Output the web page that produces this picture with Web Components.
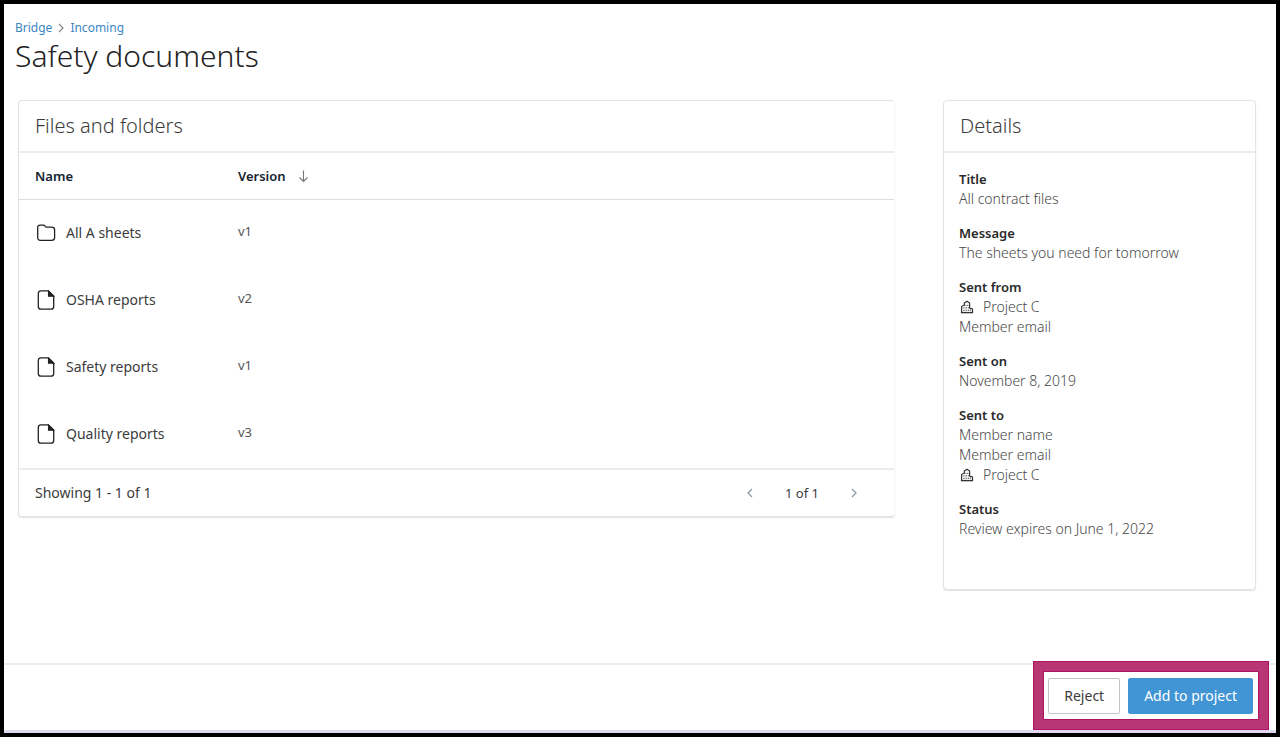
<!DOCTYPE html>
<html lang="en">
<head>
<meta charset="utf-8">
<title>Safety documents</title>
<style>
  body {
    margin: 0;
    font-family: "Noto Sans", "Open Sans", sans-serif;
    font-size: 14px;
    line-height: 20px;
    color: #3c3c3c;
    background: #000;
    --line: #e4e4e4;
    --link: #3c86c2;
    --accent: #4295d4;
    --highlight: #b83674;
    --label-size: 13px;
  }
</style>
</head>
<body>
<bridge-app></bridge-app>

<script>
class BaseElement extends HTMLElement {
  constructor() {
    super();
    this.attachShadow({ mode: "open" });
  }

  connectedCallback() {
    this.shadowRoot.innerHTML = `
      <style>:host, * { box-sizing: border-box; } ${this.styles}</style>
      ${this.markup}
    `;
  }
}

class UiIcon extends BaseElement {
  get styles() {
    return `
      :host { display: inline-flex; flex: none; }
      svg { display: block; fill: none; stroke: currentColor; }
    `;
  }

  get markup() {
    const icons = {
      folder: `<svg width="20" height="20" viewBox="0 0 20 20" stroke-width="1.3">
        <path d="M1.7 4.6c0-1.7.8-2.5 2.4-2.5h3.2c1 0 1.3.3 1.8 1.1.4.7.8 1 1.7 1h4.8c2 0 3 .8 3 2.6v7.8c0 1.8-.9 2.7-2.7 2.7H4.4c-1.8 0-2.7-.9-2.7-2.7z"/></svg>`,
      file: `<svg width="20" height="20" viewBox="0 0 20 20" stroke-width="1.3">
        <path d="M12.4.9H5C3.2.9 2.3 1.8 2.3 3.6v12.8c0 1.8.9 2.7 2.7 2.7h10c1.8 0 2.7-.9 2.7-2.7V6.1z"/>
        <path d="M12.6 1.3v4.9h4.9z" fill="currentColor"/></svg>`,
      building: `<svg width="14" height="14" viewBox="0 0 14 14" stroke-width="1.2">
        <path d="M1.6 12.5V6.6L4.3 5V3L7 1.2 9.6 3v5l2.9 1v3.5"/>
        <path d="M.9 12.6h12.2" stroke-width="1.4"/>
        <path d="M4.3 5.4h5M3.4 7.8h5.4M3.4 10.2h7.6" stroke-width="1" stroke-dasharray="1.2 1"/></svg>`,
      down: `<svg width="11" height="14" viewBox="0 0 11 14" stroke-width="1.1">
        <path d="M5.5 1.5V12M1.5 8.5l4 4 4-4"/></svg>`,
      left: `<svg width="8" height="12" viewBox="0 0 8 12" stroke-width="1.2">
        <path d="M6 2L2 6l4 4"/></svg>`,
      right: `<svg width="8" height="12" viewBox="0 0 8 12" stroke-width="1.2">
        <path d="M2 2l4 4-4 4"/></svg>`
    };
    return icons[this.getAttribute("name")];
  }
}

class BreadCrumbs extends BaseElement {
  get styles() {
    return `
      nav { display: flex; align-items: center; gap: 5px; font-size: 12px; line-height: 16px; }
      a { color: var(--link); text-decoration: none; }
      ui-icon { color: #888; }
    `;
  }

  get markup() {
    return `
      <nav aria-label="Breadcrumb">
        <a href="#bridge">Bridge</a>
        <ui-icon name="right"></ui-icon>
        <a href="#incoming">Incoming</a>
      </nav>
    `;
  }
}

class PanelCard extends BaseElement {
  get styles() {
    return `
      :host {
        display: block;
        border: 1px solid var(--line);
        border-radius: 4px;
        box-shadow: 0 1px 1px #e2e2e2;
        background: #fff;
      }
      :host([open-end]) { border-right-color: #f8f8f8; }
      h2 {
        margin: 0;
        padding: 12px 16px;
        border-bottom: 2px solid #ececec;
        font-size: 20px;
        font-weight: 300;
        line-height: 26px;
      }
    `;
  }

  get markup() {
    return `<h2>${this.getAttribute("heading")}</h2><slot></slot>`;
  }
}

class FileTable extends BaseElement {
  get styles() {
    return `
      :host { display: block; padding-bottom: 1px; }
      table { width: 100%; border-collapse: collapse; table-layout: fixed; }
      th, td { padding: 0 0 0 16px; text-align: left; }
      th {
        height: 46px;
        border-bottom: 1px solid #ddd;
        color: #14242f;
        font-size: var(--label-size);
        font-weight: 600;
      }
      th:first-child { width: 203px; }
      td { height: 67px; }
      td + td { padding-bottom: 3px; color: #555; font-size: var(--label-size); }
      .cell { display: flex; align-items: center; gap: 10px; padding-left: 1px; }
      .cell ui-icon { color: #222; }
      .sort { display: flex; align-items: center; gap: 12px; }
      .sort ui-icon { color: #777; }
    `;
  }

  get markup() {
    const rows = [
      ["folder", "All A sheets", "v1"],
      ["file", "OSHA reports", "v2"],
      ["file", "Safety reports", "v1"],
      ["file", "Quality reports", "v3"]
    ];
    return `
      <table>
        <thead>
          <tr>
            <th>Name</th>
            <th><span class="sort">Version <ui-icon name="down"></ui-icon></span></th>
          </tr>
        </thead>
        <tbody>
          ${rows.map(([icon, name, version]) => `
            <tr>
              <td><span class="cell"><ui-icon name="${icon}"></ui-icon>${name}</span></td>
              <td>${version}</td>
            </tr>`).join("")}
        </tbody>
      </table>
    `;
  }
}

class PageControl extends BaseElement {
  get styles() {
    return `
      :host {
        display: flex;
        justify-content: space-between;
        align-items: center;
        height: 48px;
        padding: 0 32px 0 16px;
        border-top: 2px solid #ececec;
      }
      .pages { display: flex; align-items: center; gap: 27px; font-size: var(--label-size); }
      button { display: flex; padding: 4px; border: 0; background: none; color: #8a97a3; }
    `;
  }

  get markup() {
    return `
      <span>Showing 1 - 1 of 1</span>
      <span class="pages">
        <button type="button" aria-label="Previous page"><ui-icon name="left"></ui-icon></button>
        <span>1 of 1</span>
        <button type="button" aria-label="Next page"><ui-icon name="right"></ui-icon></button>
      </span>
    `;
  }
}

class DetailList extends BaseElement {
  get styles() {
    return `
      :host { display: block; padding: 16px 15px 50px; }
      dl { display: flex; flex-direction: column; gap: 14px; margin: 0; }
      dt { color: #2a2a2a; font-size: var(--label-size); font-weight: 600; }
      dd { margin: 0; color: #484848; font-weight: 300; }
      .project { display: flex; align-items: center; gap: 9px; }
      .project ui-icon { color: #333; padding-left: 1px; }
    `;
  }

  get markup() {
    const project = `<dd class="project"><ui-icon name="building"></ui-icon>Project C</dd>`;
    return `
      <dl>
        <div><dt>Title</dt><dd>All contract files</dd></div>
        <div><dt>Message</dt><dd>The sheets you need for tomorrow</dd></div>
        <div><dt>Sent from</dt>${project}<dd>Member email</dd></div>
        <div><dt>Sent on</dt><dd>November 8, 2019</dd></div>
        <div><dt>Sent to</dt><dd>Member name</dd><dd>Member email</dd>${project}</div>
        <div><dt>Status</dt><dd>Review expires on June 1, 2022</dd></div>
      </dl>
    `;
  }
}

class ActionButton extends BaseElement {
  get styles() {
    return `
      :host { display: block; }
      button {
        height: 36px;
        padding: 0 15px;
        border: 1px solid #c4c4c4;
        border-radius: 2px;
        background: #fff;
        color: #3c3c3c;
        font: inherit;
      }
      :host([primary]) button {
        border-color: var(--accent);
        background: var(--accent);
        color: #fff;
      }
    `;
  }

  get markup() {
    return `<button type="button"><slot></slot></button>`;
  }
}

class HighlightBox extends BaseElement {
  get styles() {
    return `
      :host {
        display: flex;
        gap: 8px;
        padding: 7px 6px 6px 5px;
        border: 10px solid var(--highlight);
        outline: 1px solid #b01265;
        outline-offset: -1px;
        background: #fff;
        box-shadow: inset 0 0 0 1px #b01265;
      }
    `;
  }

  get markup() {
    return `<slot></slot>`;
  }
}

class BridgeApp extends BaseElement {
  get styles() {
    return `
      :host {
        display: flex;
        flex-direction: column;
        min-height: 100vh;
        border: 4px solid #000;
        background: #fff;
      }
      header { padding: 16px 11px 0; }
      h1 {
        margin: 0;
        color: #222;
        font-size: 30px;
        font-weight: 300;
        line-height: 40px;
      }
      main {
        display: grid;
        grid-template-columns: 1fr 313px;
        align-items: start;
        gap: 48px;
        flex: 1;
        padding: 24px 20px 24px 14px;
      }
      footer {
        display: flex;
        justify-content: flex-end;
        align-items: flex-end;
        height: 70px;
        padding: 0 7px 0 0;
        border-top: 2px solid #ececec;
        border-bottom: 3px solid #e0d8ef;
      }
    `;
  }

  get markup() {
    return `
      <header>
        <bread-crumbs></bread-crumbs>
        <h1>Safety documents</h1>
      </header>
      <main>
        <panel-card heading="Files and folders" open-end>
          <file-table></file-table>
          <page-control></page-control>
        </panel-card>
        <panel-card heading="Details">
          <detail-list></detail-list>
        </panel-card>
      </main>
      <footer>
        <highlight-box>
          <action-button>Reject</action-button>
          <action-button primary>Add to project</action-button>
        </highlight-box>
      </footer>
    `;
  }
}

customElements.define("ui-icon", UiIcon);
customElements.define("bread-crumbs", BreadCrumbs);
customElements.define("panel-card", PanelCard);
customElements.define("file-table", FileTable);
customElements.define("page-control", PageControl);
customElements.define("detail-list", DetailList);
customElements.define("action-button", ActionButton);
customElements.define("highlight-box", HighlightBox);
customElements.define("bridge-app", BridgeApp);
</script>
</body>
</html>
